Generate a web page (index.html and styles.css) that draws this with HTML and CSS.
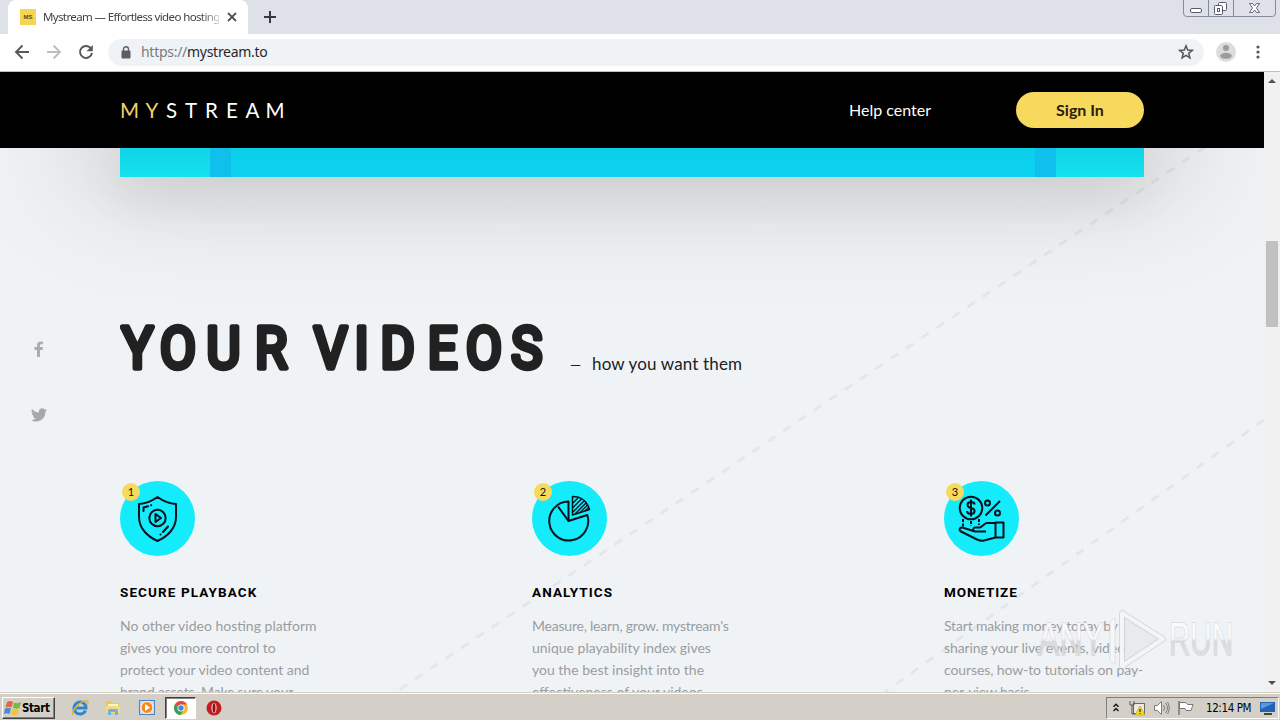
FILE: index.html
```html
<!DOCTYPE html>
<html lang="en">
<head>
<meta charset="utf-8">
<title>Mystream — Effortless video hosting</title>
<link rel="stylesheet" href="styles.css">
</head>
<body>
<div class="screen">
  <div class="tabstrip">
    <div class="tab">
      <span class="favicon">MS</span>
      <span class="tab-title">Mystream — Effortless video hosting</span>
      <svg class="tab-close" width="10" height="10" viewBox="0 0 10 10"><path d="M1 1l8 8M9 1l-8 8" stroke="#50545a" stroke-width="1.8"/></svg>
    </div>
    <svg class="newtab" width="12" height="12" viewBox="0 0 12 12"><path d="M6 0v12M0 6h12" stroke="#36393d" stroke-width="2"/></svg>
    <svg class="wincontrols" width="93" height="17" viewBox="0 0 93 17" fill="none">
      <path d="M.5 0v13q0 3.500 3 3.500h86q3 0 3-3.500V0M25.500 0v16M50.500 0v16" stroke="#858b9b"/>
      <rect x="7.500" y="8.500" width="11" height="4" rx="1.500" fill="#fff" stroke="#555b68"/>
      <rect x="35.500" y="2.500" width="8" height="8" rx="1" fill="#fff" stroke="#555b68"/>
      <rect x="31.500" y="5.500" width="8" height="9" rx="1" fill="#fff" stroke="#555b68"/>
      <rect x="34.500" y="8.500" width="2" height="3" stroke="#555b68"/>
      <path d="M66.500 3.500h3l2 2.500 2-2.500h3l-3 4.500 3 4.500h-3l-2-2.500-2 2.500h-3l3-4.500z" fill="#fff" stroke="#666c78"/>
    </svg>
  </div>

  <div class="toolbar">
    <div class="nav-icons">
      <svg width="16" height="16" viewBox="0 0 16 16" fill="none" stroke="#55585d" stroke-width="1.900"><path d="M15 8H2M8.500 1.500L2 8l6.500 6.500"/></svg>
      <svg width="16" height="16" viewBox="0 0 16 16" fill="none" stroke="#bcbec1" stroke-width="1.900"><path d="M1 8h13M7.500 1.500L14 8l-6.500 6.500"/></svg>
      <svg width="16" height="16" viewBox="0 0 16 16"><path d="M13.200 4.800A6 6 0 1 0 14 8.800" fill="none" stroke="#55585d" stroke-width="2"/><path d="M14.800 1v6.300H8.500z" fill="#55585d"/></svg>
    </div>
    <div class="omnibox">
      <svg width="10" height="13" viewBox="0 0 10 13"><rect x=".5" y="4.500" width="9" height="8" rx="1" fill="#5b5e63"/><path d="M2.500 5V3.200a2.500 2.500 0 0 1 5 0V5" fill="none" stroke="#5b5e63" stroke-width="1.400"/></svg>
      <span class="url"><span class="scheme">https://</span><span class="domain">mystream.to</span></span>
      <svg class="star" width="16" height="16" viewBox="0 0 16 16"><path d="M8 1.800l1.700 4.300 4.600.3-3.600 2.900 1.200 4.500L8 11.300l-3.900 2.500 1.200-4.500L1.700 6.400l4.600-.3z" fill="none" stroke="#53565b" stroke-width="1.500"/></svg>
    </div>
    <svg class="avatar" width="20" height="20" viewBox="0 0 20 20"><circle cx="10" cy="10" r="10" fill="#dcdcdc"/><circle cx="10" cy="5.900" r="3" fill="#9b9b9b"/><ellipse cx="10" cy="13.800" rx="5.800" ry="3" fill="#9b9b9b"/></svg>
    <svg class="menu" width="4" height="14" viewBox="0 0 4 14" fill="#55585d"><circle cx="2" cy="2" r="1.600"/><circle cx="2" cy="7" r="1.600"/><circle cx="2" cy="12" r="1.600"/></svg>
  </div>

  <div class="viewport">
    <div class="site">
      <header class="header">
        <svg class="logo" width="170" height="32" viewBox="0 0 170 32" text-anchor="middle">
          <text y="24" class="logo-text" x="9.500 32 51.500 71 91.500 112 132.500 155"><tspan fill="#f2d06a">MY</tspan><tspan fill="#fff">STREAM</tspan></text>
        </svg>
        <a class="help">Help center</a>
        <a class="signin">Sign In</a>
      </header>
      <main class="content">
        <div class="banner"><span class="pillar"></span><span class="water"></span><span class="pillar"></span></div>
        <svg class="lines" width="1264" height="544" viewBox="0 0 1264 544" fill="none" stroke="#28323c" stroke-opacity=".06" stroke-width="3" stroke-dasharray="9 9.500"><path d="M1205 -1L396 544M1264 272L885 544"/></svg>
        <div class="title">
          <svg width="430" height="72" viewBox="0 0 430 72" text-anchor="middle">
            <text y="57.500" transform="scale(.9 1)" class="title-text" x="19.500 64.500 115 168 190 234 268.500 308.500 358.500 404.500 452">YOUR VIDEOS</text>
          </svg>
          <p class="tagline"><span class="dash">—</span>how you want them</p>
        </div>
        <div class="features">
          <section class="feature">
            <div class="icon">
              <svg width="75" height="75" viewBox="0 0 75 75" fill="none" stroke="#06121c" stroke-width="2" stroke-linejoin="round" stroke-linecap="round">
                <path d="M37.500 16Q46.500 22.500 56 23v13c0 12-9.500 20-18.500 24C28.500 56 19 48 19 36V23q9.500-.5 18.500-7z"/>
                <circle cx="37.500" cy="37" r="8.200"/><path d="M35.500 33v8l5.500-4z"/><path d="M23.500 30v-3.500l4.500-1.300M31 24.200h.2M43 51l5-5.500M40.500 53.500h.1"/>
              </svg>
              <span class="badge">1</span>
            </div>
            <h2 class="h-secure">SECURE PLAYBACK</h2>
            <p><span class="ln">No other video hosting platform</span><span class="ln">gives you more control to</span><span class="ln">protect your video content and</span><span class="ln tight">brand assets. Make sure your</span></p>
          </section>
          <section class="feature">
            <div class="icon">
              <svg width="75" height="75" viewBox="0 0 75 75" fill="none" stroke="#06121c" stroke-width="2" stroke-linejoin="round">
                <path d="M36.500 20.500A19.500 19.500 0 1 0 55.300 34L36.500 40z"/><path d="M36.500 40L26 25.500"/>
                <path d="M40.500 15.500v18.500l17-5.500C55 20.500 49 15.500 40.500 15.500z" stroke-width="1.500"/>
                <path d="M41 22l5-5M41 26.500l8.500-8.500M41 31l11.500-11.500M43 33l11.500-11.500M48 31.500l8-8M53 30l4-4" stroke-width="1.300"/>
              </svg>
              <span class="badge">2</span>
            </div>
            <h2>ANALYTICS</h2>
            <p><span class="ln tighter">Measure, learn, grow. mystream's</span><span class="ln">unique playability index gives</span><span class="ln">you the best insight into the</span><span class="ln">effectiveness of your videos</span></p>
          </section>
          <section class="feature">
            <div class="icon">
              <svg width="75" height="75" viewBox="0 0 75 75" fill="none" stroke="#06121c" stroke-width="2" stroke-linejoin="round">
                <circle cx="27" cy="27" r="11.300"/>
                <path d="M30.800 23.500c-.5-2-2-2.500-3.800-2.500-4.500 0-4.800 5.300 0 6 5 .7 4.500 6 0 6-2.500 0-3.800-1-4-3M27 18.500v17"/>
                <circle cx="43.500" cy="22" r="2.500"/><circle cx="53.500" cy="32" r="2.500"/><path d="M56 20L41.500 34.500"/>
                <path d="M19 38v8M27 40v5M35 38v6" stroke-dasharray="3 1.500"/>
                <path d="M51.500 41.500h8v15h-8zM51.500 42H43c-2.500 0-5 4-7 4.500h-5c-2.500.5-2.500 3.500 0 4h11M31 50.500l-11-3.500c-4-1.500-6 2-3 3.500l16 8q4 1.800 7 1l11.500-3"/>
              </svg>
              <span class="badge">3</span>
            </div>
            <h2 class="h-monetize">MONETIZE</h2>
            <p><span class="ln tight">Start making money today by</span><span class="ln slight">sharing your live events, video</span><span class="ln slight">courses, how-to tutorials on pay-</span><span class="ln tight">per-view basis</span></p>
          </section>
        </div>
        <div class="social">
          <svg width="10" height="16" viewBox="0 0 10 16"><path d="M3 16V9H.5V6H3V4C3 1.500 4.500.5 6.500.5H9V3.200H7.300C6.300 3.200 6 3.700 6 4.500V6h3l-.4 3H6v7z" fill="#abaeb0"/></svg>
          <svg width="16" height="14" viewBox="0 0 24 20"><path d="M24 2.400a10 10 0 0 1-2.800.8A5 5 0 0 0 23.300.500a10 10 0 0 1-3.100 1.200 4.900 4.900 0 0 0-8.400 4.500A14 14 0 0 1 1.700 1a4.900 4.900 0 0 0 1.500 6.600A5 5 0 0 1 1 7a4.900 4.900 0 0 0 3.900 4.900 5 5 0 0 1-2.200.1 4.900 4.900 0 0 0 4.600 3.400A10 10 0 0 1 0 17.500 14 14 0 0 0 21.500 5a10 10 0 0 0 2.500-2.600z" fill="#a6a9ab"/></svg>
        </div>
      </main>
    </div>
    <div class="scrollbar">
      <svg width="8" height="4" viewBox="0 0 8 4"><path d="M0 4l4-4 4 4z" fill="#505050"/></svg>
      <div class="thumb"></div>
      <svg width="8" height="4" viewBox="0 0 8 4"><path d="M0 0l4 4 4-4z" fill="#505050"/></svg>
    </div>
    <svg class="watermark" width="200" height="70" viewBox="0 0 200 70">
      <defs><linearGradient id="fade" x1="0" y1="0" x2="0" y2="1"><stop offset="0" stop-color="#fff" stop-opacity=".9"/><stop offset=".5" stop-color="#fafafa" stop-opacity=".85"/><stop offset=".55" stop-color="#d4d6d7" stop-opacity=".8"/><stop offset="1" stop-color="#dfe1e2" stop-opacity=".75"/></linearGradient></defs>
      <text x="3" y="49" textLength="66" lengthAdjust="spacingAndGlyphs" class="wm-text" fill="url(#fade)">ANY</text>
      <text x="134" y="49" textLength="64" lengthAdjust="spacingAndGlyphs" class="wm-text" fill="url(#fade)">RUN</text>
      <path d="M75 15l5-3v46l-5-3z" fill="#f6f7f7" stroke="#cfd2d4" stroke-opacity=".6"/>
      <path d="M87 7v53l41-27z" fill="#e3e5e6" fill-opacity=".6" stroke="#bfc2c4" stroke-opacity=".55" stroke-width="6" stroke-linejoin="round"/>
      <path d="M87 7v53l41-27z" fill="none" stroke="#f4f5f5" stroke-width="4" stroke-linejoin="round"/>
    </svg>
  </div>

  <div class="taskbar">
    <div class="start">
      <svg width="18" height="16" viewBox="0 0 18 16"><path d="M3 2q3-2 6 0L7.500 7.500q-3-1.500-6 0z" fill="#e9633b"/><path d="M10 2.500q3 1.500 7-.5L15.500 8q-3 1.500-6.500 0z" fill="#79b843"/><path d="M1 8.500q3-1.500 6 0L5.500 14q-3-1.500-5.500 0z" fill="#4a8ad6"/><path d="M8.500 9q3 1.500 6.500 0L13.500 14.500q-3 1.500-6.500 0z" fill="#f3c23c"/></svg>
      <span>Start</span>
    </div>
    <div class="quick">
      <svg width="18" height="18" viewBox="0 0 18 18"><path d="M14.500 11.500A6 6 0 1 1 15 9H4.500" fill="none" stroke="#2e86d0" stroke-width="3"/><path d="M2 16C-1 13 11 0 16 2c2 1 0 4 0 4" fill="none" stroke="#ddb538" stroke-width="1.500"/></svg>
      <svg width="18" height="18" viewBox="0 0 18 18"><path d="M1 2h6l1 2h6v11H1z" fill="#e6c866"/><path d="M3 5h10v8H3z" fill="#fff5c7"/><path d="M1 7h14v7H1z" fill="#f3d982"/><path d="M3 16v-4q0-2 2-2h6q2 0 2 2v4h-3v-3H6v3z" fill="#6fb3dc"/></svg>
      <svg width="18" height="18" viewBox="0 0 18 18"><rect x=".5" y="1.500" width="15" height="14" fill="#c6ddf1" stroke="#4a83bb"/><circle cx="8" cy="8.500" r="6" fill="#f58b20" stroke="#fff"/><path d="M6 5v7l5-3.500z" fill="#fff"/></svg>
      <div class="active"><svg width="16" height="16" viewBox="0 0 16 16"><circle cx="8" cy="8" r="7" fill="#f1bf2e"/><path d="M8 8L1.900 4.500A7 7 0 0 1 14.100 4.500H8z" fill="#de4b3c"/><path d="M8 8L1.900 4.500A7 7 0 0 0 7.500 15L11 9.500z" fill="#35a057"/><circle cx="8" cy="8" r="3.500" fill="#fff"/><circle cx="8" cy="8" r="2.700" fill="#4584e8"/></svg></div>
      <svg width="18" height="18" viewBox="0 0 18 18"><circle cx="10" cy="9" r="7.500" fill="#c41c20"/><ellipse cx="10" cy="9" rx="2.600" ry="5.300" fill="#f1d8d5"/><ellipse cx="10" cy="9" rx="1.500" ry="4.700" fill="#941116"/></svg>
    </div>
    <div class="tray">
      <svg class="chev" width="6" height="9" viewBox="0 0 6 9" fill="none" stroke="#111" stroke-width="1.400"><path d="M.5 3.700L3 1.200l2.500 2.500M.5 8L3 5.500 5.500 8"/></svg>
      <svg class="net" width="17" height="16" viewBox="0 0 17 16"><rect x="4.500" y="3.500" width="11" height="10" fill="#ece9e2" stroke="#6b6b6b"/><path d="M1 1v4h4V1M3 5v9h5" fill="none" stroke="#555"/><path d="M11 6l5 9h-10z" fill="#f8dc2b" stroke="#b29a12" stroke-width=".6"/><path d="M11 9v3M11 13v1" stroke="#333" stroke-width="1.300"/></svg>
      <svg class="vol" width="17" height="16" viewBox="0 0 17 16" fill="none" stroke="#7d7d7d"><path d="M1.500 5.500h3l4-4v13l-4-4h-3z" fill="#fff"/><path d="M10.500 5q2 3 0 6M12.500 3q4 5 0 10M14.500 2q3.500 6 0 12"/></svg>
      <svg class="flag" width="17" height="16" viewBox="0 0 17 16"><path d="M2 1v14" stroke="#777" stroke-width="1.500"/><path d="M2.500 2.500h6l2 2H16l-2 6H9l-1-2H2.500z" fill="#fff" stroke="#777"/></svg>
      <span class="clock">12:14 PM</span>
      <svg class="desk" width="16" height="14" viewBox="0 0 16 14"><path d="M0 1h15v10H0z" fill="#2462b5"/><path d="M1 2h13L1 8z" fill="#5c98da"/><path d="M4 13h8" stroke="#444" stroke-width="2"/></svg>
    </div>
  </div>
</div>
</body>
</html>
```
FILE: styles.css
```css
* { box-sizing: border-box; }
body { margin: 0; font-family: Lato, "Liberation Sans", sans-serif; }
svg { display: block; flex: none; }
.screen { width: 1280px; height: 720px; overflow: hidden; display: flex; flex-direction: column; }

.tabstrip { height: 34px; background: #dee1e8; display: flex; align-items: flex-start; padding-left: 8px; }
.tab { width: 240px; height: 34px; background: #fff; border-radius: 8px 8px 0 0; display: flex; align-items: center; padding: 0 11px 0 12px; }
.favicon { width: 16px; height: 16px; background: #f7d454; font: bold 6px/16px "Liberation Sans", sans-serif; text-align: center; color: #57491c; }
.tab-title { width: 177px; margin: 0 8px 0 7px; white-space: nowrap; overflow: hidden; font: 11.500px/18px "Noto Sans", sans-serif; letter-spacing: -0.62px; color: #3f4246; -webkit-mask-image: linear-gradient(90deg, #000 158px, transparent 182px); }
.newtab { margin: 11px 0 0 16px; }
.wincontrols { margin-left: auto; margin-right: 4px; }

.toolbar { height: 38px; background: #fff; border-bottom: 1px solid #bcbec1; display: flex; align-items: center; padding: 0 20px 1px 14px; }
.nav-icons { display: flex; gap: 16px; }
.omnibox { margin-left: 14px; width: 1096px; height: 27px; border-radius: 14px; background: #f0f3f6; display: flex; align-items: center; padding: 0 10px 0 13px; }
.url { margin-left: 10px; font: 14px/20px "Noto Sans", sans-serif; letter-spacing: -0.28px; color: #25282c; }
.scheme { color: #777b80; }
.star { margin-left: auto; }
.avatar { margin-left: 12px; }
.menu { margin-left: auto; }

.viewport { height: 620px; display: flex; position: relative; }
.site { width: 1264px; display: flex; flex-direction: column; }
.header { height: 76px; background: #000; color: #fff; display: flex; align-items: center; padding: 0 120px; position: relative; }
.logo-text { font: 20.500px Lato, sans-serif; }
.help { margin: -2px 0 0 auto; font-size: 16px; }
.signin { width: 128px; height: 36px; margin-left: 85px; border-radius: 18px; background: #f7d95e; color: #2b200d; font-size: 16px; font-weight: 700; line-height: 36px; text-align: center; }

.content { height: 544px; background: #f0f3f6; position: relative; overflow: hidden; padding: 0 120px; }
.lines { position: absolute; left: 0; top: 0; }
.banner { height: 29px; padding: 0 88px 0 90px; display: flex; background: linear-gradient(180deg, #12d3e8, #14e2ee); box-shadow: 0 12px 50px rgba(50,40,35,.1), 0 -30px 120px 30px rgba(45,30,25,.25); }
.pillar { width: 21px; background: #10c0ec; }
.water { flex: 1; background: linear-gradient(180deg, #0ad0e8, #0dd1f2); }
.title { position: relative; display: flex; margin-top: 134px; height: 72px; }
.title-text { font: 400 58px Roboto, sans-serif; fill: #212121; stroke: #212121; stroke-width: 5.400px; stroke-linejoin: round; }
.tagline { margin: 42px 0 0 20px; font-size: 17px; line-height: 22px; color: #212121; white-space: nowrap; letter-spacing: .15px; }
.dash { display: inline-block; width: 22px; font-size: 14px; }
.features { position: relative; display: flex; gap: 212px; margin-top: 98px; }
.feature { width: 200px; flex: none; }
.icon { position: relative; width: 75px; height: 75px; border-radius: 50%; background: #14ecfc; }
.badge { position: absolute; left: 2px; top: 2px; width: 18px; height: 18px; border-radius: 50%; background: #f7d95e; font-size: 11px; line-height: 18px; text-align: center; color: #111; }
.feature h2 { margin: 27px 0 0; font: 700 13.500px/18px Roboto, sans-serif; letter-spacing: 1.1px; color: #000; white-space: nowrap; }
.feature .h-monetize { letter-spacing: .9px; }
.feature p { margin: 14px 0 0; font-size: 14px; line-height: 22px; color: #999da0; }
.ln { display: block; white-space: nowrap; }
.slight { letter-spacing: -.1px; }
.tight { letter-spacing: -.17px; }
.tighter { letter-spacing: -.22px; }
.social { position: absolute; left: 31px; top: 193px; display: flex; flex-direction: column; gap: 51px; width: 16px; align-items: center; }

.scrollbar { width: 16px; background: #f1f1f1; display: flex; flex-direction: column; align-items: center; padding: 7px 0; }
.thumb { width: 12px; height: 86px; background: #c1c1c1; margin: 158px 0 auto; }
.watermark { position: absolute; left: 1035px; top: 534px; }
.wm-text { font: 47px "Liberation Sans", sans-serif; stroke: #c8cbcd; stroke-opacity: .5; stroke-width: 2px; paint-order: stroke; }

.taskbar { height: 28px; background: #d4d0c8; border-top: 1px solid #d4d0c8; box-shadow: inset 0 1px #fff; display: flex; align-items: center; padding: 3px 1px 1px 2px; font-family: "DejaVu Sans Condensed", "DejaVu Sans", sans-serif; }
.start { width: 53px; height: 22px; border: 1px solid; border-color: #fff #404040 #404040 #fff; box-shadow: inset -1px -1px #808080; display: flex; align-items: center; font-size: 11.500px; font-weight: 700; padding-left: 1px; letter-spacing: -.4px; }
.quick { display: flex; align-items: center; margin-left: 16px; gap: 16px; }
.active { width: 31px; height: 22px; margin: 0 -8px; background: #fff; border: 1px solid; border-color: #404040 #fff #fff #404040; box-shadow: inset 1px 1px #808080; display: flex; align-items: center; justify-content: center; }
.tray { margin-left: auto; width: 173px; height: 22px; border: 1px solid; border-color: #808080 #fff #fff #808080; display: flex; align-items: center; padding-left: 6px; }
.net { margin-left: 10px; }
.vol, .flag { margin-left: 7px; }
.clock { width: 48px; margin-left: 12px; font-size: 11.500px; white-space: nowrap; letter-spacing: -.4px; }
.desk { margin-left: 6px; }
```
